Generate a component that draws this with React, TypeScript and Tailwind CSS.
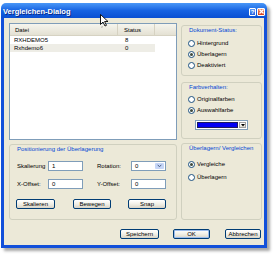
import React from 'react'

const font = "font-['Liberation_Sans',Arial,sans-serif]"

function Radio({ label, checked = false }: { label: string; checked?: boolean }) {
  return (
    <div className="flex items-center gap-[2px] h-full">
      <span className="w-[7px] h-[7px] rounded-full border border-[#1C5180] bg-white flex items-center justify-center shrink-0">
        {checked && <span className="w-[3.5px] h-[3.5px] rounded-full bg-[#3d4a3d]" />}
      </span>
      <span className="text-[6px] leading-[7px] text-black whitespace-nowrap">{label}</span>
    </div>
  )
}

function GroupTitle({ children }: { children: React.ReactNode }) {
  return <div className="text-[6px] leading-[8px] text-[#0046D5] pl-[7px] whitespace-nowrap">{children}</div>
}

function XpButton({ label, w, isDefault = false }: { label: string; w: string; isDefault?: boolean }) {
  return (
    <div
      className={`${w} h-[10px] border border-[#003C74] rounded-[2px] bg-gradient-to-b from-white via-[#F1EFE7] to-[#D9D4C7] flex items-center justify-center text-[6px] leading-[6px] text-black ${
        isDefault ? 'shadow-[inset_0_0_0_1px_#9DBCEC]' : ''
      }`}
    >
      {label}
    </div>
  )
}

function TextInput({ value }: { value: string }) {
  return (
    <div className="w-[35px] h-[10px] border border-[#7F9DB9] bg-white text-[6px] leading-[8px] pl-[3px] text-black">
      {value}
    </div>
  )
}

export default function App() {
  return (
    <div className={`w-[278px] h-[257px] bg-white relative overflow-hidden ${font}`}>
      <div className="ml-px mt-[3px] w-[266px] h-[245px] flex flex-col rounded-t-[5px] shadow-[3px_3px_3px_rgba(0,0,0,0.35)]">
        {/* title bar */}
        <div className="h-[15px] rounded-t-[5px] bg-gradient-to-b from-[#4A97F7] via-[#1763E2] to-[#0A4FD2] flex items-center pt-[2px] pl-[2px] pr-[2px]">
          <span className="text-white font-bold text-[7.5px] leading-[9px] [text-shadow:1px_1px_0_#0A2A88] whitespace-nowrap">
            Vergleichen-Dialog
          </span>
          <div className="ml-auto flex gap-px">
            <div className="w-[7px] h-[8px] rounded-[1px] border border-white bg-gradient-to-b from-[#5E9CFA] to-[#2460DE] flex items-center justify-center text-white font-bold text-[6px] leading-[6px]">
              ?
            </div>
            <div className="w-[8px] h-[8px] rounded-[1px] border border-white bg-gradient-to-b from-[#F08A62] to-[#D4401C] flex items-center justify-center">
              <svg width="5" height="5" viewBox="0 0 5 5">
                <path d="M0.5 0.5 L4.5 4.5 M4.5 0.5 L0.5 4.5" stroke="white" strokeWidth="1.2" />
              </svg>
            </div>
          </div>
        </div>

        {/* body */}
        <div className="flex-1 bg-[#ECE9D8] border-x-[3px] border-b-[3px] border-[#1250DA] flex flex-col pt-[5px] pl-[5px] pr-[2px]">
          <div className="h-[197px] flex gap-[4px]">
            {/* left column */}
            <div className="w-[168px] flex flex-col gap-[4px]">
              <div className="h-[117px] border border-[#7F9DB9] bg-white flex flex-col">
                <div className="h-[12px] flex bg-gradient-to-b from-[#F6F5EE] to-[#E4E1D3] border-b border-[#D6D2C2] text-[6px] leading-[6px] text-black">
                  <div className="w-[108px] flex items-center pl-[5px] border-r border-[#D6D2C2]">Datei</div>
                  <div className="w-[37px] flex items-center pl-[6px] border-r border-[#D6D2C2]">Status</div>
                  <div className="flex-1" />
                </div>
                <div className="h-[8px] flex items-center text-[6px] leading-[6px] text-black">
                  <div className="w-[108px] pl-[4px]">RXHDEMO5</div>
                  <div className="w-[37px] pl-[7px]">8</div>
                </div>
                <div className="h-[8px] flex items-center text-[6px] leading-[6px] text-black">
                  <div className="w-[145px] h-full flex items-center bg-[#EEEDE6]">
                    <div className="w-[108px] pl-[4px]">Rxhdemo6</div>
                    <div className="w-[37px] pl-[7px]">0</div>
                  </div>
                </div>
              </div>

              <div className="flex-1 border border-[#D0D0BF] rounded-[3px] flex flex-col">
                <GroupTitle>Positionierung der Überlagerung</GroupTitle>
                <div className="mt-[8px] pl-[7px] flex flex-col gap-[8px]">
                  <div className="h-[10px] flex items-center text-[6px] leading-[6px] text-black">
                    <div className="w-[31px] whitespace-nowrap">Skalierung</div>
                    <TextInput value="1" />
                    <div className="w-[14px]" />
                    <div className="w-[34px]">Rotation:</div>
                    <div className="w-[35px] h-[10px] border border-[#7F9DB9] bg-white flex">
                      <div className="flex-1 pl-[3px] leading-[8px]">0</div>
                      <div className="w-[9px] m-px bg-[#C6D6F7] rounded-[1px] flex items-center justify-center">
                        <svg width="5" height="4" viewBox="0 0 5 4">
                          <path d="M0.7 0.8 L2.5 2.8 L4.3 0.8" stroke="#4D6185" strokeWidth="1" fill="none" />
                        </svg>
                      </div>
                    </div>
                  </div>
                  <div className="h-[10px] flex items-center text-[6px] leading-[6px] text-black">
                    <div className="w-[31px] whitespace-nowrap">X-Offset:</div>
                    <TextInput value="0" />
                    <div className="w-[14px]" />
                    <div className="w-[34px] whitespace-nowrap">Y-Offset:</div>
                    <TextInput value="0" />
                  </div>
                  <div className="mt-[2px] flex -ml-px">
                    <XpButton label="Skalieren" w="w-[39px]" />
                    <div className="w-[18px]" />
                    <XpButton label="Bewegen" w="w-[38px]" />
                    <div className="w-[17px]" />
                    <XpButton label="Snap" w="w-[38px]" />
                  </div>
                </div>
              </div>
            </div>

            {/* right column */}
            <div className="w-[81px] flex flex-col pt-[2px]">
              <div className="h-[51px] border border-[#D0D0BF] rounded-[3px] flex flex-col">
                <GroupTitle>Dokument-Status:</GroupTitle>
                <div className="mt-[4px] pl-[6px] flex flex-col">
                  <div className="h-[11px]"><Radio label="Hintergrund" /></div>
                  <div className="h-[11px]"><Radio label="Überlagern" checked /></div>
                  <div className="h-[11px]"><Radio label="Deaktiviert" /></div>
                </div>
              </div>

              <div className="mt-[6px] h-[57px] border border-[#D0D0BF] rounded-[3px] flex flex-col">
                <GroupTitle>Farbverhalten:</GroupTitle>
                <div className="mt-[3px] pl-[6px] flex flex-col">
                  <div className="h-[11px]"><Radio label="Originalfarben" /></div>
                  <div className="h-[11px]"><Radio label="Auswahlfarbe" checked /></div>
                </div>
                <div className="mt-[4px] ml-[13px] w-[53px] h-[10px] border border-[#7F9DB9] bg-white flex p-px gap-px">
                  <div className="flex-1 bg-[#0000F5] border border-[#1a1a60]" />
                  <div className="w-[7px] bg-gradient-to-b from-white to-[#E2DFD2] border border-[#A0A0A0] flex items-center justify-center">
                    <svg width="4" height="3" viewBox="0 0 4 3">
                      <path d="M0 0 L4 0 L2 2.5 Z" fill="black" />
                    </svg>
                  </div>
                </div>
              </div>

              <div className="mt-[4px] flex-1 border border-[#D0D0BF] rounded-[3px] flex flex-col">
                <GroupTitle>Überlagern/ Vergleichen</GroupTitle>
                <div className="mt-[6px] pl-[6px] flex flex-col">
                  <div className="h-[13px]"><Radio label="Vergleiche" checked /></div>
                  <div className="h-[13px]"><Radio label="Überlagern" /></div>
                </div>
              </div>
            </div>
          </div>

          {/* bottom buttons */}
          <div className="mt-[9px] flex justify-end pr-[1px]">
            <XpButton label="Speichern" w="w-[39px]" />
            <div className="w-[14px]" />
            <XpButton label="OK" w="w-[37px]" isDefault />
            <div className="w-[15px]" />
            <XpButton label="Abbrechen" w="w-[36px]" />
          </div>
        </div>
      </div>

      {/* mouse pointer */}
      <svg className="absolute left-[100px] top-[14px]" width="10" height="14" viewBox="0 0 10 14">
        <path d="M1.5 12.5 L2.5 13.5" stroke="rgba(0,0,0,0.2)" strokeWidth="2" />
        <path d="M0.5 0.5 L0.5 10.5 L3 8 L5 12 L6.5 11.3 L4.6 7.5 L8 7.5 Z" fill="white" stroke="black" strokeWidth="0.9" strokeLinejoin="round" />
      </svg>
    </div>
  )
}
